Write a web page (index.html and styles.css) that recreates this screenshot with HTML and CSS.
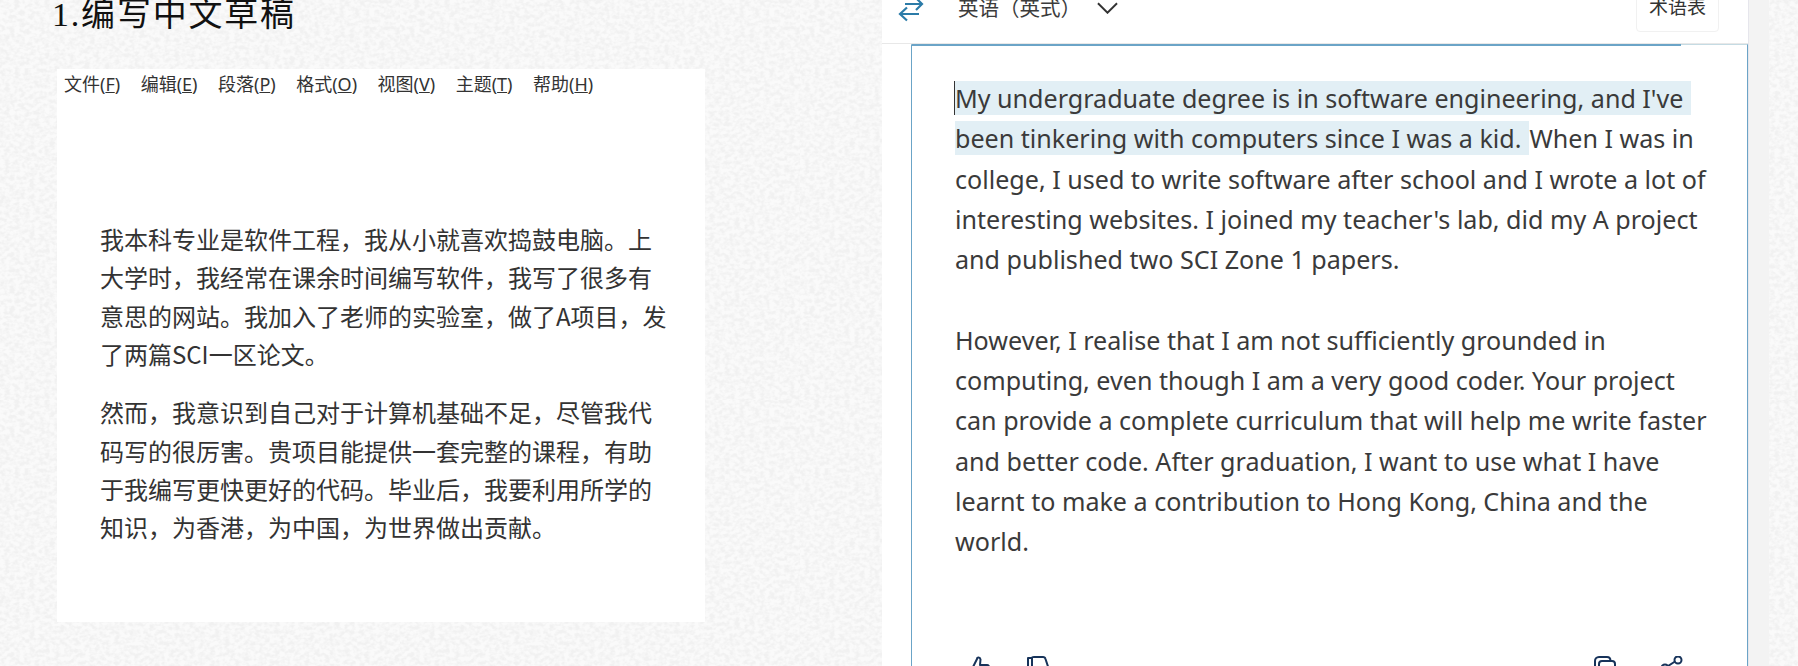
FILE: index.html
```html
<!DOCTYPE html>
<html lang="zh-CN">
<head>
    <meta charset="UTF-8">
    <meta name="viewport" content="width=device-width, initial-scale=1.0">
    <title>编写中文草稿</title>
    <link rel="stylesheet" href="styles.css">
</head>
<body>
  <div class="page">

    <div class="draft">
      <h1 class="draft-title">1.编写中文草稿</h1>
      <div class="editor">
        <div class="menu">
          <span>文件(<u>F</u>)</span>
          <span>编辑(<u>E</u>)</span>
          <span>段落(<u>P</u>)</span>
          <span>格式(<u>O</u>)</span>
          <span>视图(<u>V</u>)</span>
          <span>主题(<u>T</u>)</span>
          <span>帮助(<u>H</u>)</span>
        </div>
        <div class="editor-text">
          <p>我本科专业是软件工程，我从小就喜欢捣鼓电脑。上大学时，我经常在课余时间编写软件，我写了很多有意思的网站。我加入了老师的实验室，做了A项目，发了两篇SCI一区论文。</p>
          <p>然而，我意识到自己对于计算机基础不足，尽管我代码写的很厉害。贵项目能提供一套完整的课程，有助于我编写更快更好的代码。毕业后，我要利用所学的知识，为香港，为中国，为世界做出贡献。</p>
        </div>
      </div>
    </div>

    <div class="translator">
      <div class="lang-bar">
        <svg class="swap-icon" viewBox="0 0 24 24" fill="none" stroke="#2b7ba8" stroke-width="2.2">
          <path d="M7 4h16M18 -2l6 6-6 6"/>
          <path d="M21 14H2M9 7.500l-7 6.500 7 6.500"/>
        </svg>
        <span class="lang-name">英语（英式）</span>
        <svg class="chevron" viewBox="0 0 22 12" fill="none" stroke="#333" stroke-width="2">
          <path d="M1 1l10 10L21 1"/>
        </svg>
        <button class="glossary" type="button">术语表</button>
      </div>
      <div class="result">
        <div class="result-text">
          <span class="hl hl-first">My undergraduate degree is in software engineering, and I've</span>
          <span class="hl">been tinkering with computers since I was a kid.</span>When I was in college, I used to write software after school and I wrote a lot of interesting websites. I joined my teacher's lab, did my A project and published two SCI Zone 1 papers.
          <br><br>
          However, I realise that I am not sufficiently grounded in computing, even though I am a very good coder. Your project can provide a complete curriculum that will help me write faster and better code. After graduation, I want to use what I have learnt to make a contribution to Hong Kong, China and the world.
        </div>
        <div class="result-actions">
          <div class="action-group">
            <svg class="action-icon" viewBox="0 0 24 24" fill="none" stroke="#17335a" stroke-width="2" stroke-linejoin="round">
              <path d="M2 11h4v11H2zM6 11l4-8c0-2 3-2 3.500 0.500L13 9h7c1.500 0 2.500 1.500 2 3l-2 8c-.3 1.200-1.200 2-2.500 2H6"/>
            </svg>
            <svg class="action-icon" viewBox="0 0 24 24" fill="none" stroke="#17335a" stroke-width="2" stroke-linejoin="round">
              <path d="M2 2h4v11H2zM6 2c0-1 1-1 2-1h9c1.300 0 2.200.8 2.500 2l3 9c.5 1.500-.5 3-2 3h-7l.5 3.500c.5 2-.5 3.500-2.500 3.500l-5-9"/>
            </svg>
          </div>
          <div class="action-group action-group-right">
            <svg class="action-icon" viewBox="0 0 24 24" fill="none" stroke="#17335a" stroke-width="2" stroke-linejoin="round">
              <path d="M2 18V5c0-2 1.500-4 4-4h8c2 0 3.500 1.500 3.500 4"/>
              <rect x="6" y="5" width="16" height="19" rx="3"/>
            </svg>
            <svg class="action-icon" viewBox="0 0 24 24" fill="none" stroke="#17335a" stroke-width="2">
              <circle cx="18" cy="4" r="3.500"/>
              <circle cx="18" cy="20" r="3.500"/>
              <circle cx="5" cy="12" r="3.500"/>
              <path d="M8 10l7-4.500M8 14l7 4.500"/>
            </svg>
          </div>
        </div>
      </div>
    </div>

  </div>
</body>
</html>
```

FILE: styles.css
```css
html, body {
    margin: 0;
    height: 666px;
    overflow: hidden;
}

body {
    background-color: #fafafa;
    background-image: url("data:image/svg+xml,%3Csvg xmlns='http://www.w3.org/2000/svg' width='400' height='400'%3E%3Cfilter id='n'%3E%3CfeTurbulence type='fractalNoise' baseFrequency='.2 .26' numOctaves='2' seed='4' stitchTiles='stitch'/%3E%3CfeColorMatrix values='0 0 0 0 .88 0 0 0 0 .88 0 0 0 0 .88 3 0 0 0 -1.1'/%3E%3C/filter%3E%3Crect width='400' height='400' filter='url(%23n)'/%3E%3C/svg%3E");
}

.page {
    display: flex;
    height: 666px;
}

/* left side: chinese draft */
.draft {
    width: 882px;
    flex: none;
    padding-left: 52px;
    box-sizing: border-box;
}

.draft-title {
    margin: 0;
    height: 69px;
    font-family: "Liberation Serif", "Noto Sans CJK SC", serif;
    font-size: 34px;
    font-weight: 400;
    letter-spacing: 1.8px;
    line-height: 30px;
    color: #111;
}

.editor {
    margin-left: 5px;
    width: 648px;
    height: 553px;
    background: #fff;
    font-family: "Noto Sans CJK SC", "Noto Sans", sans-serif;
    color: #333;
}

.menu {
    display: flex;
    gap: 20.500px;
    padding: 2px 0 0 7px;
    font-family: "Noto Sans", "Noto Sans CJK SC", sans-serif;
    font-size: 18px;
    line-height: 26px;
}

.editor-text {
    width: 570px;
    margin: 0 0 0 43px;
    padding-top: 123px;
    font-size: 24px;
    line-height: 38.4px;
}

.editor-text p {
    margin: 0 0 19.500px;
}

/* right side: translation */
.translator {
    width: 866px;
    flex: none;
    height: 666px;
    background: #fff;
    box-shadow: 1px 0 0 #e6e6ec, 21px 0 0 #f3f3f3;
    font-family: "Noto Sans CJK SC", "Noto Sans", sans-serif;
}

.lang-bar {
    display: flex;
    align-items: flex-start;
    height: 43px;
    border-bottom: 1px solid #e8e8e8;
}

.swap-icon {
    width: 24px;
    height: 24px;
    margin: 0 0 0 16px;
    flex: none;
    overflow: visible;
}

.lang-name {
    margin: -8px 0 0 36px;
    font-size: 20.500px;
    line-height: 30px;
    color: #3c3c3c;
}

.chevron {
    width: 21px;
    height: 12px;
    margin: 2px 0 0 16px;
}

.glossary {
    margin: -12px 29px 0 auto;
    width: 83px;
    height: 44px;
    padding: 0 0 8px;
    box-sizing: border-box;
    background: #fff;
    border: 1px solid #f1f1f1;
    border-radius: 4px;
    font-family: inherit;
    font-size: 19px;
    line-height: 30px;
    color: #333;
}

.result {
    position: relative;
    margin-left: 29px;
    width: 837px;
    box-sizing: border-box;
    height: 640px;
    border: 1px solid #6ba4c7;
    border-top: 1px solid #c5dbe3;
    border-bottom: 0;
    padding: 33px 30px 0 43px;
}

/* darker part of the top line */
.result::before {
    content: "";
    position: absolute;
    top: -1px;
    left: 0;
    width: 769px;
    height: 2px;
    background: #6ba4c7;
}

.result-text {
    font-family: "Noto Sans", sans-serif;
    font-size: 25.100px;
    line-height: 40.3px;
    color: #3a3a3a;
}

.hl {
    background: #e2eff5;
    padding-right: 8px;
}

.hl-first {
    box-shadow: -1px 0 0 #333;
}

.result-actions {
    display: flex;
    justify-content: space-between;
    margin-top: 94px;
    padding: 0 33px 0 12px;
}

.action-group {
    display: flex;
    gap: 35px;
}

.action-group-right {
    gap: 43px;
}

.action-icon {
    width: 24px;
    height: 24px;
}
```
